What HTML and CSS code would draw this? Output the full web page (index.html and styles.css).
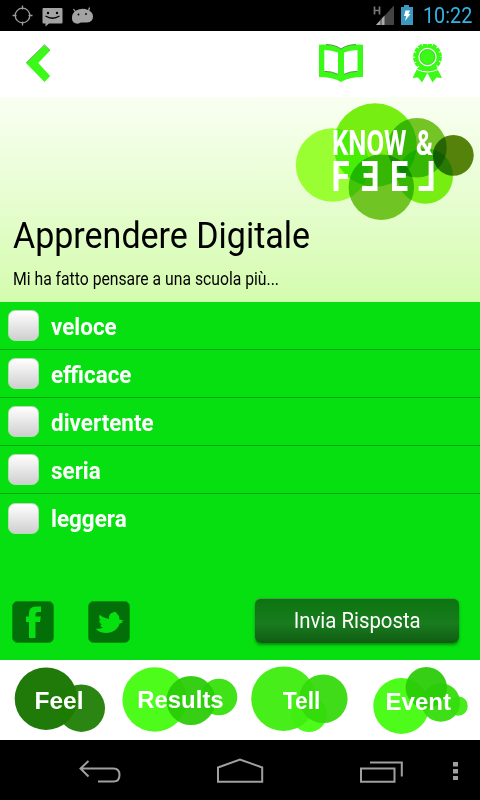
FILE: index.html
```html
<!DOCTYPE html>
<html lang="it">
<head>
    <meta charset="UTF-8">
    <meta name="viewport" content="width=device-width, initial-scale=1.0">
    <title>Know &amp; Feel</title>
    <link rel="stylesheet" href="styles.css">
</head>
<body>

    <!-- Android status bar -->
    <div class="status-bar">
        <svg class="status-left" width="96" height="31" viewBox="0 0 96 31">
            <g fill="none" stroke="#9c9c9c" stroke-width="1.3">
                <circle cx="22.5" cy="15.5" r="7.3"/>
                <path d="M22.5 5.5v4M22.5 21.5v4M12.5 15.5h4M28.5 15.5h4"/>
            </g>
            <path fill="#a3a3a3" d="M43.5 8h18q1 0 1 1v13.5q0 1-1 1H49L45.5 26.5V23.5H43.5q-1 0-1-1V9q0-1 1-1z"/>
            <circle cx="48" cy="13" r="1.2"/>
            <circle cx="57" cy="13" r="1.2"/>
            <path d="M45.5 16q7 4.5 14 0" fill="none" stroke="#000" stroke-width="1.3"/>
            <path fill="#a3a3a3" d="M76 10.5q6-3 12-.5 5 2 5 6.5 0 5.5-6 6h-6q-2 1.500-5 1-4-1-4-5-.5-5 4-8z"/>
            <path d="M73.5 9l2 3M89.5 7.5L88.5 11" stroke="#a3a3a3" stroke-width="1.3"/>
            <circle cx="78.5" cy="14.5" r=".9"/>
            <circle cx="86" cy="14" r=".9"/>
        </svg>
        <div class="status-right">
            <svg width="44" height="31" viewBox="0 0 44 31">
                <path d="M2.5 6.5v8M7.5 6.5v8M2.5 10.5h5" stroke="#777" stroke-width="1.7"/>
                <path d="M22 5.5V25H4z" fill="#444"/>
                <path d="M12.5 15.5V25H4z" fill="#ababab"/>
                <path d="M9 17v8" stroke="#222" stroke-width=".8"/>
                <path d="M29 7h3V5h5v2h4v18H29z" fill="#3b98bf"/>
                <path d="M33.5 10.5h4.5l-1.5 3.5h2L33 21l1.2-5H32z" fill="#fff"/>
            </svg>
            <span class="clock">10:22</span>
        </div>
    </div>

    <!-- Top bar -->
    <div class="top-bar">
        <svg width="24" height="38" viewBox="0 0 24 38">
            <path d="M18.5 1L24.3 6.5 12.2 19 24.3 32 18.5 38 0 19z" fill="#3cfa18"/>
            <path d="M0 19L18.5.8l5.8 5.7" fill="none" stroke="#528048" stroke-width=".6"/>
        </svg>
        <div class="top-icons">
            <svg width="44" height="39" viewBox="0 0 44 39">
                <path fill="#3cfa18" fill-rule="evenodd" d="M0 .8Q13-.5 22 5 31-.5 44 .8V33Q30 33 22 38 14 33 0 33zM5.3 6V27.500Q13 27.5 19 30.5V8.500Q13 6 5.3 6zM38.5 6Q31 6 25 8.5V30.500Q31 27.5 38.5 27.5z"/>
                <path d="M7 .6Q16 .5 22 5 28 .5 37 .6M5.3 27.300Q13 27.3 19 30.3M25 30.300Q31 27.3 38.5 27.3" fill="none" stroke="#3b7a2e" stroke-width=".8"/>
            </svg>
            <svg width="30" height="39" viewBox="0 0 30 39">
                <path fill="#3cfa18" d="M5.5 24L.5 34l5.5-.5L10 38.5 15.5 29l5 9.5 4-5 5.500.5-5-10z"/>
                <circle cx="15.5" cy="13" r="12.3" fill="#3cfa18"/>
                <circle cx="15.5" cy="13" r="12.5" fill="none" stroke="#3cfa18" stroke-width="3.8" stroke-dasharray="4 .909"/>
                <path d="M5 25.500q10.5 5 21 0" fill="none" stroke="#fff" stroke-width="1"/>
                <circle cx="15.5" cy="13" r="8.5" fill="none" stroke="#e9ffe5" stroke-width="1.5"/>
                <circle cx="15.5" cy="13" r="7.5" fill="none" stroke="#4b9c3e" stroke-width=".5"/>
            </svg>
        </div>
    </div>

    <!-- Question -->
    <div class="question">
        <svg class="logo" width="180" height="120" viewBox="0 0 180 120">
            <g class="bubbles">
                <circle cx="37.5" cy="63" r="36.7" fill="#99ff33"/>
                <circle cx="80" cy="43" r="41.7" fill="#77ee11"/>
                <circle cx="122" cy="45.7" r="29.7" fill="#74c425"/>
                <circle cx="130.3" cy="74" r="27.8" fill="#77ee11"/>
                <circle cx="86.3" cy="85.2" r="32.7" fill="#70c423"/>
                <circle cx="158.3" cy="53.3" r="20.4" fill="#55820a"/>
            </g>
            <g class="logo-text">
                <text class="know" x="37" y="52.5" textLength="74.5" lengthAdjust="spacingAndGlyphs">KNOW</text>
                <text class="know" x="121" y="52.5" textLength="17" lengthAdjust="spacingAndGlyphs">&amp;</text>
                <text transform="translate(36.5 89) scale(.77 1)">F</text>
                <text transform="translate(84.5 89) scale(-.75 1)">E</text>
                <text transform="translate(95 89) scale(.75 1)">E</text>
                <text transform="translate(140.5 89) scale(-.75 1)">L</text>
            </g>
        </svg>
        <h1>Apprendere Digitale</h1>
        <p>Mi ha fatto pensare a una scuola più...</p>
    </div>

    <!-- Answers -->
    <form class="answers">
        <label class="answer"><input type="checkbox"><span>veloce</span></label>
        <label class="answer"><input type="checkbox"><span>efficace</span></label>
        <label class="answer"><input type="checkbox"><span>divertente</span></label>
        <label class="answer"><input type="checkbox"><span>seria</span></label>
        <label class="answer"><input type="checkbox"><span>leggera</span></label>

        <div class="actions">
            <svg class="social" width="42" height="42" viewBox="0 0 42 42">
                <rect x=".5" y=".5" width="41" height="41" rx="5" fill="#036f08" stroke="#04940b"/>
                <path fill="#06e010" d="M17 37V21H14V15.500h3V12q0-6.500 7-6.500h5V11H26q-2.500 0-2.500 2.200v2.300h5.300L28 21H23.500V37z"/>
            </svg>
            <svg class="social" width="42" height="42" viewBox="0 0 42 42">
                <rect x=".5" y=".5" width="41" height="41" rx="5" fill="#036f08" stroke="#04940b"/>
                <path fill="#06e010" d="M7.500 27.500Q11.500 28.500 15 26.500 12.500 26 12.300 24L14 23.500Q11 22 11 19.300L12.500 19.500Q10.500 17 11.300 13.800Q15 17 20.800 18Q20.800 12 25.500 11.300L27.500 10.800 29 12.800Q31.500 14.500 31.500 18.500L36 19.700 33.500 20.700 34.800 21.500 31.800 22.500Q29 31.500 18.500 32 11.500 32 7.500 27.500z"/>
            </svg>
            <button type="button" class="send-btn"><span>Invia Risposta</span></button>
        </div>
    </form>

    <!-- Bottom tabs -->
    <svg class="tabs" width="480" height="80" viewBox="0 0 480 80">
        <g>
            <circle cx="46" cy="38.7" r="31.3" fill="#1f7a09"/>
            <circle cx="81.3" cy="48.2" r="23.7" fill="#1b7c00" fill-opacity=".93"/>
            <text x="34.5" y="49.3" textLength="49" lengthAdjust="spacingAndGlyphs">Feel</text>
        </g>
        <g>
            <circle cx="154.7" cy="39.5" r="32.3" fill="#4dfc1b"/>
            <circle cx="219" cy="37" r="18.3" fill="#40e218"/>
            <circle cx="191" cy="40.5" r="24.5" fill="#29cc07" fill-opacity=".94"/>
            <text x="137.2" y="47.7" textLength="86.5" lengthAdjust="spacingAndGlyphs">Results</text>
        </g>
        <g>
            <circle cx="309" cy="54" r="18" fill="#4dfc1b"/>
            <circle cx="283.5" cy="38.7" r="32.3" fill="#41ed11" fill-opacity=".96"/>
            <circle cx="323.3" cy="38.8" r="24.3" fill="#34da0c" fill-opacity=".94"/>
            <text x="282.8" y="49" textLength="37.5" lengthAdjust="spacingAndGlyphs">Tell</text>
        </g>
        <g>
            <circle cx="401.3" cy="46" r="28" fill="#4dfc1b"/>
            <circle cx="458" cy="46" r="9.8" fill="#48ec1c"/>
            <circle cx="440.7" cy="42.5" r="19.3" fill="#35dd0c" fill-opacity=".95"/>
            <circle cx="426.3" cy="27.7" r="20.7" fill="#29cc07" fill-opacity=".94"/>
            <text x="385.5" y="49.7" textLength="65.5" lengthAdjust="spacingAndGlyphs">Event</text>
        </g>
    </svg>

    <!-- Android navigation bar -->
    <svg class="nav-bar" width="480" height="60" viewBox="0 0 480 60">
        <g fill="none" stroke="#a0a0a0" stroke-width="2">
            <path d="M98 41.5h15.500q6 0 6-6.500t-6-6.500H81M88.5 21L80.5 28.5l8 8"/>
            <path d="M218 41.8V27.5L240 19.5l22.2 8v14.3z"/>
            <path d="M361 28.5h33.5v13.300H361zM370 22.5h31.8V36.5"/>
        </g>
        <path fill="#a0a0a0" d="M453 22h5v4.500h-5zM453 29h5v4.500h-5zM453 36h5v4h-5z"/>
    </svg>

</body>
</html>
```
FILE: styles.css
```css
body {
    font-family: 'Roboto', sans-serif;
    margin: 0;
    width: 480px;
    height: 800px;
    overflow: hidden;
    display: flex;
    flex-direction: column;
    background-color: #000;
}

svg {
    display: block;
    flex-shrink: 0;
}

.status-bar {
    height: 31px;
    display: flex;
    justify-content: space-between;
    background-color: #000;
}

.status-right {
    display: flex;
    gap: 7px;
    padding-right: 7px;
}

.clock {
    width: 50px;
    color: #33b5e5;
    font-size: 21.5px;
    line-height: 32px;
    white-space: nowrap;
    transform: scaleX(0.92);
    transform-origin: left;
}

/* Top bar */
.top-bar {
    height: 66px;
    box-sizing: border-box;
    padding: 13px 38px 0 26px;
    display: flex;
    justify-content: space-between;
    background-color: #fff;
}

.top-icons {
    display: flex;
    gap: 49px;
}

/* Question */
.question {
    height: 205px;
    background: linear-gradient(#f9fff2, #d4fcae);
    overflow: hidden;
}

.logo {
    margin: 5px 0 0 295px;
}

.bubbles {
    isolation: isolate;
}

.bubbles circle {
    mix-blend-mode: multiply;
}

.logo-text {
    fill: #fff;
    font-weight: bold;
    font-size: 43px;
}

.know {
    font-size: 35.5px;
}

h1 {
    margin: -7px 0 0 13px;
    width: max-content;
    font-size: 37px;
    font-weight: normal;
    line-height: 42px;
    transform: scaleX(0.919);
    transform-origin: left;
}

.question p {
    margin: 12px 0 0 13px;
    width: max-content;
    font-size: 17.5px;
    line-height: 20px;
    transform: scaleX(0.899);
    transform-origin: left;
}

/* Answers */
.answers {
    height: 358px;
    display: flex;
    flex-direction: column;
    background-color: #06e010;
}

.answer {
    height: 48px;
    box-sizing: border-box;
    padding-left: 8px;
    display: flex;
    align-items: center;
    gap: 12px;
    border-bottom: 1px solid #05a30c;
    color: #fff;
    font-size: 23px;
    font-weight: bold;
}

.answer:nth-child(5) {
    border-bottom: none;
}

.answer span {
    padding-top: 3px;
    transform: scaleX(0.975);
    transform-origin: left;
}

.answer input {
    appearance: none;
    width: 31px;
    height: 31px;
    margin: 0;
    box-sizing: border-box;
    border: 1px solid #b5dcb5;
    border-radius: 7px;
    background: linear-gradient(#fff, #cfcfcf);
}

.actions {
    margin: auto 21px 17px 12px;
    display: flex;
    align-items: flex-end;
    gap: 33.5px;
}

.send-btn {
    margin-left: auto;
    width: 204px;
    height: 45px;
    padding: 0 0 2px;
    border: none;
    border-top: 1px solid #45a045;
    border-radius: 6px;
    background: linear-gradient(#0b750f, #197c1e 55%, #0f5c13);
    box-shadow: 0 2px 3px rgba(0, 60, 0, 0.5);
    color: #fff;
    font-family: 'Roboto', sans-serif;
    font-size: 22.5px;
}

.send-btn span {
    display: inline-block;
    transform: scaleX(0.905);
}

/* Bottom tabs */
.tabs {
    background-color: #fff;
}

.tabs text {
    fill: #fff;
    font-family: 'Liberation Sans', sans-serif;
    font-size: 24px;
    font-weight: bold;
}

.nav-bar {
    background-color: #000;
}
```
